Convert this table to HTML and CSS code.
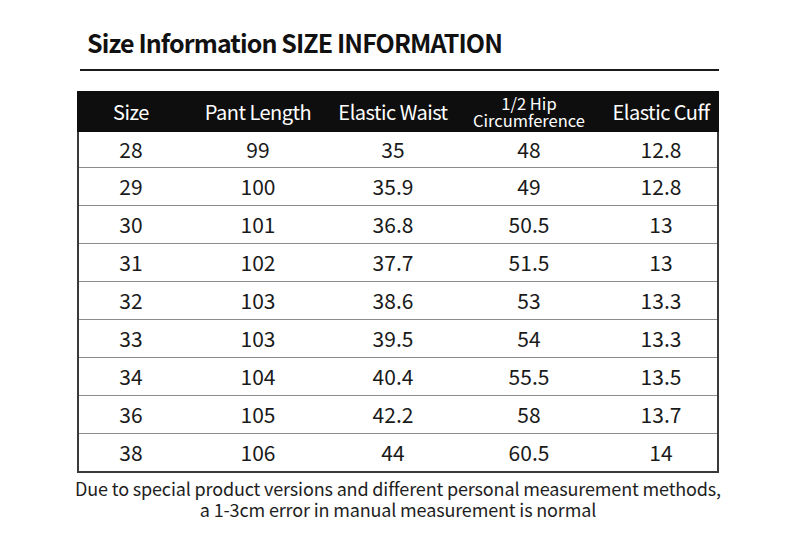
FILE: index.html
```html
<!DOCTYPE html>
<html>
<head>
<meta charset="utf-8">
<link rel="stylesheet" href="styles.css">
</head>
<body>
<div class="page">
  <div class="title-wrap">
    <h1 class="title">Size Information SIZE INFORMATION</h1>
  </div>
  <div class="table">
    <div class="row head">
      <div class="cell">Size</div>
      <div class="cell">Pant Length</div>
      <div class="cell">Elastic Waist</div>
      <div class="cell two">1/2 Hip<br>Circumference</div>
      <div class="cell">Elastic Cuff</div>
    </div>
    <div class="row first"><div class="cell">28</div><div class="cell">99</div><div class="cell">35</div><div class="cell">48</div><div class="cell">12.8</div></div>
    <div class="row"><div class="cell">29</div><div class="cell">100</div><div class="cell">35.9</div><div class="cell">49</div><div class="cell">12.8</div></div>
    <div class="row"><div class="cell">30</div><div class="cell">101</div><div class="cell">36.8</div><div class="cell">50.5</div><div class="cell">13</div></div>
    <div class="row"><div class="cell">31</div><div class="cell">102</div><div class="cell">37.7</div><div class="cell">51.5</div><div class="cell">13</div></div>
    <div class="row"><div class="cell">32</div><div class="cell">103</div><div class="cell">38.6</div><div class="cell">53</div><div class="cell">13.3</div></div>
    <div class="row"><div class="cell">33</div><div class="cell">103</div><div class="cell">39.5</div><div class="cell">54</div><div class="cell">13.3</div></div>
    <div class="row"><div class="cell">34</div><div class="cell">104</div><div class="cell">40.4</div><div class="cell">55.5</div><div class="cell">13.5</div></div>
    <div class="row"><div class="cell">36</div><div class="cell">105</div><div class="cell">42.2</div><div class="cell">58</div><div class="cell">13.7</div></div>
    <div class="row"><div class="cell">38</div><div class="cell">106</div><div class="cell">44</div><div class="cell">60.5</div><div class="cell">14</div></div>
  </div>
  <p class="note">Due to special product versions and different personal measurement methods,<br>a 1-3cm error in manual measurement is normal</p>
</div>
</body>
</html>
```
FILE: styles.css
```css
html, body {
  margin: 0;
  padding: 0;
  background: #ffffff;
}
body {
  font-family: "Noto Sans CJK SC", "Noto Sans", sans-serif;
  color: #141414;
}
.page {
  width: 800px;
  height: 536px;
  padding-top: 27px;
  box-sizing: border-box;
}
.title-wrap {
  margin-left: 80px;
  width: 639px;
  border-bottom: 2.5px solid #1a1a1a;
  padding-bottom: 12px;
}
.title {
  margin: 0;
  padding-left: 7px;
  font-size: 25px;
  line-height: 30px;
  font-weight: 700;
  letter-spacing: -0.9px;
  color: #111;
}
.table {
  margin-top: 20px;
  margin-left: 77px;
  width: 642px;
  box-sizing: border-box;
  border: 2px solid #3a3a3a;
  border-top: none;
}
.row {
  display: grid;
  grid-template-columns: 104px 150px 120px 152px 112px;
  height: 38px;
  border-top: 1.5px solid #8c8c8c;
  box-sizing: border-box;
}
.row.head {
  height: 41px;
  background: #0e0e0e;
  border-top: none;
  margin: 0 -2px;
  padding: 0 2px;
}
.row.first {
  height: 35px;
  border-top: none;
}
.cell {
  display: flex;
  align-items: center;
  justify-content: center;
  text-align: center;
  font-size: 21px;
  line-height: 1;
  color: #1a1a1a;
}
.head .cell {
  color: #ffffff;
  font-size: 20px;
  font-weight: 400;
  letter-spacing: -0.5px;
}
.head .cell.two {
  font-size: 16.5px;
  line-height: 17px;
  letter-spacing: 0;
}
.note {
  margin: 5px 0 0 0;
  text-align: center;
  font-size: 18px;
  line-height: 21px;
  letter-spacing: -0.15px;
  color: #1e1e1e;
  padding-right: 4px;
}
```
